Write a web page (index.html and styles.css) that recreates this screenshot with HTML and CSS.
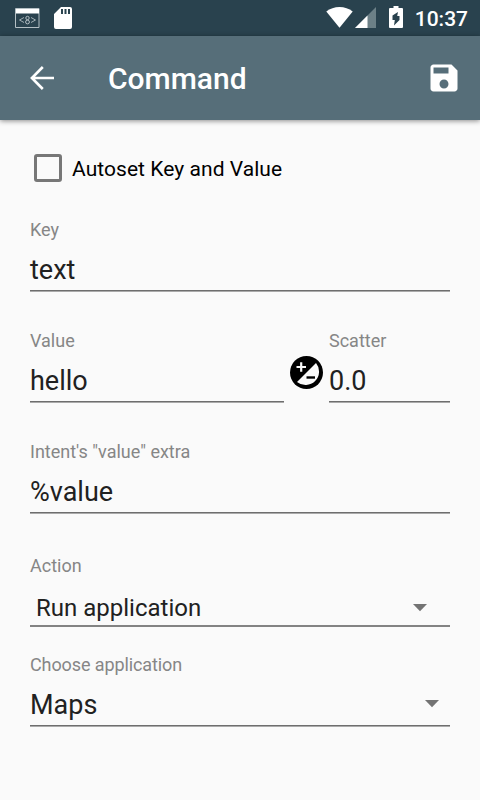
FILE: index.html
```html
<!DOCTYPE html>
<html lang="en">
<head>
    <meta charset="UTF-8">
    <meta name="viewport" content="width=device-width, initial-scale=1.0">
    <title>Command</title>
    <link rel="stylesheet" href="styles.css">
</head>
<body>
    <div class="status-bar">
        <svg class="icon-code" width="25" height="21" viewBox="0 0 25 21">
            <path d="M.5 .5h23.500v19H.5z" fill="none" stroke="#b4bfc4"/>
            <path d="M1 1h23v4.500H1z" fill="#fff"/>
            <path d="M9 9.500l-4.500 2.500 4.500 2.500M16 9.500l4.500 2.500-4.500 2.500" fill="none" stroke="#a3afb4"/>
            <circle cx="12.500" cy="10" r="1.700" fill="none" stroke="#b4bfc4"/>
            <circle cx="12.500" cy="14" r="1.900" fill="none" stroke="#b4bfc4"/>
        </svg>
        <svg class="icon-sd" width="18" height="22" viewBox="0 0 18 22">
            <path fill="#fff" fill-rule="evenodd" d="M7 0h9q2 0 2 2v18q0 2-2 2H2q-2 0-2-2V7zM7 2v5h2V2zM10.500 2v5h2V2zM14 2v5h2V2z"/>
        </svg>
        <div class="status-right">
            <svg class="icon-wifi" width="27" height="21" viewBox="0 0 27 21">
                <path fill="#fff" d="M13.500 20.800L.3 4.500C4 1.600 8.500 0 13.500 0s9.500 1.600 13.200 4.500z"/>
            </svg>
            <svg class="icon-signal" width="21" height="21" viewBox="0 0 21 21">
                <path fill="#6c8087" d="M21 0v21H0z"/>
                <path fill="#fff" d="M12.500 8.500V21H0z"/>
            </svg>
            <svg class="icon-battery" width="14" height="22" viewBox="0 0 14 22">
                <path fill="#fff" d="M4.500 0h5v2H13q1 0 1 1v18q0 1-1 1H1q-1 0-1-1V3q0-1 1-1h3.500z"/>
                <path fill="#29424e" d="M9 6L3.500 9.500V14h2.300L5 19.500l5.500-5.500v-4H8.200z"/>
            </svg>
            <span class="clock">10:37</span>
        </div>
    </div>

    <div class="toolbar">
        <svg class="icon-back" width="24" height="24" viewBox="0 0 24 24">
            <path fill="none" stroke="#fff" stroke-width="2.600" d="M12.800 1L1.900 12l10.900 11M2 12h22"/>
        </svg>
        <h1 class="title">Command</h1>
        <svg class="icon-save" width="36" height="36" viewBox="0 0 24 24">
            <path fill="#fff" d="M17 3H5c-1.110 0-2 .9-2 2v14c0 1.100.89 2 2 2h14c1.100 0 2-.9 2-2V7l-4-4zm-5 16c-1.660 0-3-1.340-3-3s1.340-3 3-3 3 1.340 3 3-1.340 3-3 3zm3-10H5V5h10v4z"/>
        </svg>
    </div>

    <div class="form">
        <div class="checkbox">
            <span class="box"></span>
            <span class="checkbox-text">Autoset Key and Value</span>
        </div>

        <div class="field">
            <div class="label">Key</div>
            <div class="input">text</div>
        </div>

        <div class="row">
            <div class="field field-value">
                <div class="label">Value</div>
                <div class="input">hello</div>
            </div>
            <svg class="icon-scatter" width="33" height="33" viewBox="0 0 33 33">
                <circle cx="16.500" cy="16.500" r="16.500" fill="#000"/>
                <path fill="#fafafa" d="M26 7a13.500 13.500 0 0 1-19 19z"/>
                <path stroke="#fafafa" stroke-width="2.200" d="M6.500 11h9.500M11.200 6.300v9.500"/>
                <path stroke="#000" stroke-width="2.400" d="M16.500 21.500h8.500"/>
            </svg>
            <div class="field field-scatter">
                <div class="label">Scatter</div>
                <div class="input">0.0</div>
            </div>
        </div>

        <div class="field">
            <div class="label">Intent's "value" extra</div>
            <div class="input">%value</div>
        </div>

        <div class="field field-action">
            <div class="label">Action</div>
            <div class="select">
                <span>Run application</span>
                <svg width="15" height="8" viewBox="0 0 15 8"><path fill="#737373" d="M0 0h14L7 7.200z"/></svg>
            </div>
        </div>

        <div class="field">
            <div class="label label-app">Choose application</div>
            <div class="input input-select">
                <span>Maps</span>
                <svg width="15" height="8" viewBox="0 0 15 8"><path fill="#737373" d="M0 0h14L7 7.200z"/></svg>
            </div>
        </div>
    </div>
</body>
</html>
```

FILE: styles.css
```css
* {
    box-sizing: border-box;
}
body {
    margin: 0;
    height: 800px;
    background: #fafafa;
    color: #212121;
    font-family: Roboto, "Liberation Sans", sans-serif;
    overflow: hidden;
}
svg {
    display: block;
    flex: none;
}
.status-bar {
    display: flex;
    height: 36px;
    padding: 0 12px 0 15px;
    background: #29424e;
}
.icon-code {
    margin-top: 8px;
}
.icon-sd {
    margin: 7px 0 0 14px;
}
.status-right {
    display: flex;
    margin-left: auto;
}
.icon-wifi {
    margin-top: 7px;
}
.icon-signal {
    margin: 7px 0 0 2px;
}
.icon-battery {
    margin: 6px 0 0 13px;
}
.clock {
    margin-left: 12px;
    color: #fff;
    font-size: 21px;
    font-weight: 500;
    line-height: 38px;
}
.toolbar {
    display: flex;
    align-items: center;
    height: 84px;
    padding: 0 18px 0 30px;
    background: #566e79;
    box-shadow: 0 1px 5px rgba(0, 0, 0, 0.45);
}
.title {
    margin: 0 auto 0 54px;
    padding-top: 2px;
    color: #fff;
    font-size: 30px;
    font-weight: 500;
    line-height: 36px;
}
.form {
    padding: 34px 30px 0;
}
.checkbox {
    display: flex;
    align-items: center;
    height: 28px;
    margin-bottom: 37px;
    padding-left: 4px;
    color: #000;
    font-size: 21px;
}
.checkbox-text {
    padding-top: 2px;
    letter-spacing: 0.05px;
}
.box {
    width: 28px;
    height: 28px;
    margin-right: 10px;
    border: 3px solid #777;
    border-radius: 3px;
}
.field {
    margin-bottom: 38px;
}
.label {
    margin-bottom: 14px;
    color: #868686;
    font-size: 18px;
    line-height: 21px;
}
.label-app {
    letter-spacing: -0.1px;
}
.input {
    height: 38px;
    border-bottom: 1px solid #aaa;
    box-shadow: inset 0 -1px #6e6e6e;
    font-size: 27px;
    line-height: 32px;
}
.row {
    display: flex;
}
.field-value {
    width: 254px;
}
.icon-scatter {
    margin: 26px 6px 0 6px;
}
.field-scatter {
    flex: 1;
}
.field-action {
    margin: 41px 0 27px;
}
.field-action .label {
    margin-bottom: 18px;
}
.select,
.input-select {
    display: flex;
    justify-content: space-between;
}
.select {
    height: 33px;
    padding: 0 22px 0 6px;
    border-bottom: 2px solid #838383;
    font-size: 24px;
    line-height: 28px;
}
.select svg {
    margin-top: 10px;
}
.input-select {
    padding-right: 10px;
}
.input-select svg {
    margin-top: 11px;
}
```
